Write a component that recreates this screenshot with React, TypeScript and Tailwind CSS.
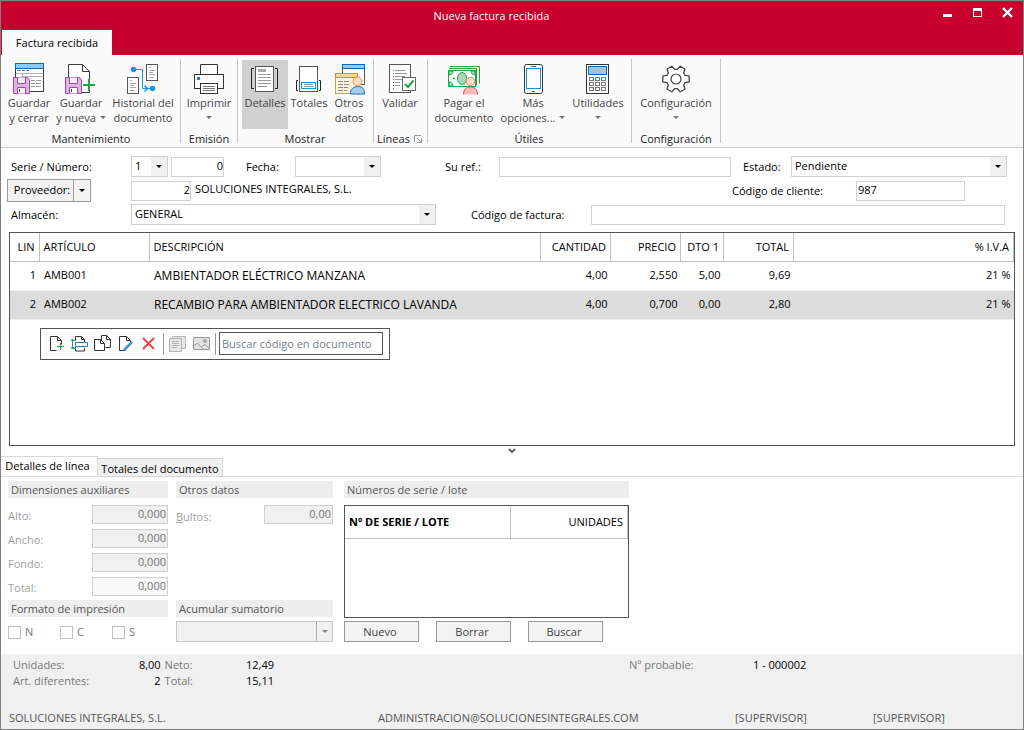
import { ReactNode, useState } from 'react';

/* ---------- Datos de la factura ---------- */

interface Line {
  lin: number;
  code: string;
  description: string;
  quantity: string;
  price: string;
  discount: string;
  total: string;
  vat: string;
}

const lines: Line[] = [
  { lin: 1, code: 'AMB001', description: 'AMBIENTADOR ELÉCTRICO MANZANA', quantity: '4,00', price: '2,550', discount: '5,00', total: '9,69', vat: '21 %' },
  { lin: 2, code: 'AMB002', description: 'RECAMBIO PARA AMBIENTADOR ELECTRICO LAVANDA', quantity: '4,00', price: '0,700', discount: '0,00', total: '2,80', vat: '21 %' },
];

const dimensions = [
  { id: 'alto', label: 'Alto:', readOnly: false },
  { id: 'ancho', label: 'Ancho:', readOnly: false },
  { id: 'fondo', label: 'Fondo:', readOnly: false },
  { id: 'total', label: 'Total:', readOnly: true },
];

/* ---------- Iconos de la cinta ---------- */

// Lienzo común de 32x32 para todos los iconos grandes
function Icon({ children, smooth = false }: { children: ReactNode; smooth?: boolean }) {
  return (
    <svg width="32" height="32" viewBox="0 0 32 32" fill="none" shapeRendering={smooth ? 'auto' : 'crispEdges'} className="shrink-0" aria-hidden="true">
      {children}
    </svg>
  );
}

// Disquete morado que se repite en los dos botones de guardar
function Floppy() {
  return (
    <g stroke="#a04ca0">
      <path d="M.5 14.5h14l2 2v14h-16z" fill="#dcb4dc" />
      <path d="M4.5 14.5v6h8v-6" fill="#f6ecf6" />
      <path d="M4.5 30.5v-6h8v6" fill="#fff" />
      <path d="M6.5 26v3" stroke="#444" />
    </g>
  );
}

function SaveCloseIcon() {
  return (
    <Icon smooth>
      <rect x="2.5" y="5.5" width="28" height="23" fill="#fff" stroke="#3b3b3b" />
      <rect x="2.5" y=".5" width="28" height="5" fill="#91c8f0" stroke="#0f68b0" />
      <path d="M4 7.5h4m1 0h3m1 0h3" stroke="#777" />
      <path d="M3 10.5h27M9.5 10.5v4M9.5 13.5h21" stroke="#b0b0b0" />
      <path d="M18 17.5h4m1 0h5M18 20.5h4m1 0h5M18 23.5h4m1 0h5" stroke="#999" />
      <Floppy />
    </Icon>
  );
}

function SaveNewIcon() {
  return (
    <Icon smooth>
      <path d="M3.5 14.5v-13h14l7 7v21h-8z" fill="#fff" />
      <path d="M3.5 14V1.5h14l7 7V18M24.5 27v2.5H17" stroke="#3b3b3b" />
      <path d="M17.5 1.5v7h7" stroke="#3b3b3b" />
      <Floppy />
      <path d="M18 22h12M24 16v12" stroke="#1aa64b" strokeWidth="2" />
    </Icon>
  );
}

function HistoryIcon() {
  return (
    <Icon smooth>
      <rect x="19.5" y="1.5" width="11" height="16" fill="#fff" stroke="#555" />
      <rect x=".5" y="14.5" width="11" height="16" fill="#fff" stroke="#555" />
      <path d="M22 4.5h2M22 7.5h6M22 9.5h4M22 11.5h6M22 14.5h5M3 17.5h2M3 20.5h6M3 22.5h4M3 24.5h6M3 27.5h5" stroke="#aaa" />
      <path d="M6 6.5h9.5v19H25" stroke="#0a9be3" />
      <path d="M17.5 22.5l3 3-3 3" stroke="#0a9be3" strokeWidth="1.5" />
      <circle cx="6.5" cy="6.5" r="2.7" fill="#0a9be3" />
      <circle cx="25.5" cy="25.5" r="2.7" fill="#0a9be3" />
    </Icon>
  );
}

function PrinterIcon() {
  return (
    <Icon smooth>
      <path d="M7.5 11.5v-10h17v10" fill="#fff" stroke="#333" />
      <rect x="1.5" y="11.5" width="29" height="14" fill="#fff" stroke="#333" />
      <rect x="4" y="14" width="3" height="3" fill="#1e7fcb" />
      <rect x="7.5" y="20.5" width="17" height="10" fill="#fff" stroke="#333" />
      <path d="M10 23.5h12M10 25.5h12M10 27.5h12" stroke="#777" />
    </Icon>
  );
}

function DetailsIcon() {
  return (
    <Icon smooth>
      <rect x="6.5" y="3.5" width="18" height="25" fill="#fff" stroke="#555" />
      <path d="M5 5.5H2.5v20H5M26 5.5h2.5v20H26" stroke="#222" />
      <rect x="9" y="6" width="8" height="3" fill="#aaa" />
      <path d="M9 11.5h13M9 14.5h13M9 17.5h13M9 20.5h13M9 23.5h9" stroke="#999" />
    </Icon>
  );
}

function TotalsIcon() {
  return (
    <Icon smooth>
      <rect x="6.5" y="3.5" width="18" height="25" fill="#fff" stroke="#555" />
      <path d="M5 17.5H3.5v10H5M26 17.5h1.5v10H26" stroke="#222" />
      <rect x="8.5" y="19.5" width="14" height="6" fill="#fff" stroke="#0a9be3" />
      <path d="M11 21.5h9M11 23.5h9" stroke="#999" />
    </Icon>
  );
}

function OtherDataIcon() {
  return (
    <Icon smooth>
      <rect x="9.5" y="1.5" width="22" height="20" fill="#fff" stroke="#555" />
      <rect x="9.5" y="1.5" width="22" height="4" fill="#91c8f0" stroke="#0f68b0" />
      <rect x="2.5" y="10.5" width="22" height="20" fill="#fdf3dc" stroke="#b4a078" />
      <rect x="2.5" y="10.5" width="22" height="4" fill="#f9d68c" stroke="#e0892c" />
      <path d="M5 18.5h5m1 0h5M5 21.5h5m1 0h5M5 24.5h5m1 0h4M5 27.5h5m1 0h3" stroke="#8a8a8a" />
      <path d="M17.5 31c0-5 3-7.500 7.500-7.500s6.500 2.500 6.500 7.500z" fill="#a5cdf0" stroke="#1e6fb8" />
      <circle cx="24.5" cy="18.5" r="4.5" fill="#fbdcc0" stroke="#d9935a" />
    </Icon>
  );
}

function ValidateIcon() {
  return (
    <Icon smooth>
      <rect x="5.5" y="1.5" width="21" height="28" fill="#fff" stroke="#555" />
      <path d="M9 7.5h1M9 13.5h1M9 19.5h1" stroke="#d03030" />
      <path d="M9 10.5h1M9 16.5h1M9 22.5h1M9 25.5h1" stroke="#1aa64b" />
      <path d="M11 7.5h10M11 10.5h12M11 13.5h10M11 16.5h7M11 19.5h5M11 22.5h5" stroke="#999" />
      <rect x="18.5" y="14.5" width="13" height="13" fill="#fff" stroke="#666" />
      <path d="M21 21l3 3 5.5-6.5" stroke="#1aa64b" strokeWidth="2" />
    </Icon>
  );
}

function PayIcon() {
  return (
    <Icon smooth>
      <path d="M2 3.5h29.5v17M1 5.500h27.500v17" stroke="#1aa64b" />
      <rect x=".5" y="7.5" width="27" height="16" fill="#fff" stroke="#1aa64b" />
      <path d="M1 8h4c0 2.500-1.500 4-4 4zM27 8h-4c0 2.500 1.500 4 4 4zM1 23h4c0-2.500-1.500-4-4-4z" fill="#a8d8b8" stroke="#1aa64b" />
      <ellipse cx="14" cy="15.5" rx="4.5" ry="6" fill="#a8d8b8" stroke="#1aa64b" />
      <circle cx="6" cy="15.5" r="1" fill="#1aa64b" />
      <path d="M15.5 31.5c0-5 2.500-7.500 7-7.500s7 2.500 7 7.500" fill="#f6b8b8" stroke="#e05050" />
      <circle cx="22.5" cy="18.5" r="4.300" fill="#fbdcc0" stroke="#c98f5e" />
    </Icon>
  );
}

function PhoneIcon() {
  return (
    <Icon smooth>
      <rect x="7.5" y="1.5" width="18" height="29" rx="2" fill="#fff" stroke="#333" />
      <rect x="9.5" y="5.5" width="14" height="20" fill="#fff" stroke="#1e88c9" />
      <path d="M14 3.5h5M15 28.5h3" stroke="#555" />
    </Icon>
  );
}

function CalculatorIcon() {
  return (
    <Icon smooth>
      <rect x="4.5" y="1.5" width="22" height="29" fill="#fff" stroke="#333" />
      <rect x="6.5" y="3.5" width="18" height="8" fill="#91c8f0" stroke="#0f68b0" />
      {[14, 19, 24].map((y) =>
        [7, 13, 19].map((x) => <rect key={`${x}-${y}`} x={x + 0.5} y={y + 0.5} width="4" height="3" stroke="#777" />)
      )}
    </Icon>
  );
}

// Puntos del engranaje: seis dientes repartidos cada 60 grados
const gearPoints = [0, 60, 120, 180, 240, 300]
  .flatMap((a) => [[a - 22, 9.8], [a - 12, 13.5], [a + 12, 13.5], [a + 22, 9.8]])
  .map(([a, r]) => {
    const rad = (a * Math.PI) / 180;
    return `${(16 + r * Math.cos(rad)).toFixed(1)},${(16 + r * Math.sin(rad)).toFixed(1)}`;
  })
  .join(' ');

function GearIcon() {
  return (
    <Icon smooth>
      <polygon points={gearPoints} fill="#fff" stroke="#444" strokeWidth="1.3" strokeLinejoin="round" />
      <circle cx="16" cy="16" r="5" stroke="#444" strokeWidth="1.2" />
    </Icon>
  );
}

/* ---------- Piezas comunes ---------- */

function Caret({ className = '' }: { className?: string }) {
  return (
    <svg width="6" height="3" viewBox="0 0 6 3" fill="currentColor" className={className} aria-hidden="true">
      <path d="M0 0h6L3 3z" />
    </svg>
  );
}

interface RibbonButtonProps {
  icon: ReactNode;
  first: string;
  second?: string;
  menu?: boolean;
  active?: boolean;
  width: string;
}

// Botón grande de la cinta: icono arriba y una o dos líneas de texto
function RibbonButton({ icon, first, second, menu, active, width }: RibbonButtonProps) {
  return (
    <button type="button" className={`flex h-[69px] flex-col items-center pt-[3px] text-[11px] leading-[15px] whitespace-nowrap text-[#444] ${width} ${active ? 'bg-[#d0d0d0]' : 'hover:bg-[#e4e4e4]'}`}>
      {icon}
      <span>{first}</span>
      {(second || menu) && (
        <span className="flex h-[15px] items-center gap-1">
          {second}
          {menu && <Caret className="text-[#777]" />}
        </span>
      )}
    </button>
  );
}

function RibbonGroup({ title, width, launcher, children }: { title: string; width: string; launcher?: boolean; children: ReactNode }) {
  return (
    <section className={`flex h-[84px] flex-col border-r border-[#c6c6c6] pt-px ${width}`}>
      <div className="flex justify-center">{children}</div>
      <div className="flex items-center justify-center gap-1 pt-[2px] text-[11px] leading-[15px] text-[#222]">
        {title}
        {launcher && (
          <button type="button" aria-label="Opciones de líneas" className="pt-[2px]">
            <svg width="9" height="9" viewBox="0 0 9 9" fill="none" stroke="#999">
              <path d="M.5 7V.5H7M3 3l4 4M7.5 3.500v4h-4" />
            </svg>
          </button>
        )}
      </div>
    </section>
  );
}

// Desplegable con la flecha sobre fondo gris a la derecha
function SelectBox({ id, value, className, disabled }: { id: string; value: string; className: string; disabled?: boolean }) {
  return (
    <div className={`relative flex h-[21px] border ${disabled ? 'border-[#c8c8c8] bg-[#f0f0f0]' : 'border-[#d0d0d0] bg-white'} ${className}`}>
      <select id={id} aria-label={id} disabled={disabled} className="w-full appearance-none bg-transparent pl-[3px] outline-none">
        <option>{value}</option>
      </select>
      <span className={`pointer-events-none absolute inset-y-0 right-0 flex w-4 items-center justify-center bg-[#f0f0f0] ${disabled ? 'border-l border-[#aaa] text-[#888]' : 'text-black'}`}>
        <Caret />
      </span>
    </div>
  );
}

const field = 'h-[20px] min-w-0 border border-[#d0d0d0] bg-white pb-[2px] outline-none';

function SectionTitle({ children }: { children: ReactNode }) {
  return <h3 className="h-[17px] bg-[#eeeeee] pl-[3px] leading-[17px] text-[#555]">{children}</h3>;
}

/* ---------- Zonas de la ventana ---------- */

function TitleBar() {
  return (
    <header className="bg-[#c8002d] text-white">
      <div className="flex h-[29px] items-center pr-[10px] pl-10">
        <h1 className="flex-1 pt-[2px] text-center text-[11px]">Nueva factura recibida</h1>
        <div className="flex gap-[19px] pb-[6px]">
          <button type="button" aria-label="Minimizar">
            <svg width="11" height="11" viewBox="0 0 11 11" fill="#fff"><path d="M1 7h9v3H1z" /></svg>
          </button>
          <button type="button" aria-label="Maximizar">
            <svg width="11" height="11" viewBox="0 0 11 11" fill="#fff" fillRule="evenodd"><path d="M1 1h9v9H1zM2 4v5h7V4z" /></svg>
          </button>
          <button type="button" aria-label="Cerrar">
            <svg width="11" height="11" viewBox="0 0 11 11" stroke="#fff" strokeWidth="2.4"><path d="M1 1l9 9M10 1l-9 9" /></svg>
          </button>
        </div>
      </div>
      <div className="flex px-px" role="tablist">
        <button type="button" role="tab" aria-selected="true" className="h-[25px] w-[110px] bg-[#fafafa] pt-[2px] text-[11px] text-black">
          Factura recibida
        </button>
      </div>
    </header>
  );
}

function Ribbon() {
  return (
    <nav className="flex h-[93px] border-b border-[#c6c6c6] bg-[#fafafa] pt-[4px]">
      <RibbonGroup title="Mantenimiento" width="w-[180px] pl-px">
        <RibbonButton icon={<SaveCloseIcon />} first="Guardar" second="y cerrar" width="w-[52px]" />
        <RibbonButton icon={<SaveNewIcon />} first="Guardar" second="y nueva" menu width="w-[52px]" />
        <RibbonButton icon={<HistoryIcon />} first="Historial del" second="documento" width="w-[72px]" />
      </RibbonGroup>
      <RibbonGroup title="Emisión" width="w-[57px]">
        <RibbonButton icon={<PrinterIcon />} first="Imprimir" menu width="w-[52px]" />
      </RibbonGroup>
      <RibbonGroup title="Mostrar" width="w-[136px] pr-px">
        <RibbonButton icon={<DetailsIcon />} first="Detalles" active width="w-[46px]" />
        <RibbonButton icon={<TotalsIcon />} first="Totales" width="w-[42px]" />
        <RibbonButton icon={<OtherDataIcon />} first="Otros" second="datos" width="w-[38px]" />
      </RibbonGroup>
      <RibbonGroup title="Líneas" width="w-[54px] pr-px" launcher>
        <RibbonButton icon={<ValidateIcon />} first="Validar" width="w-[46px]" />
      </RibbonGroup>
      <RibbonGroup title="Útiles" width="w-[204px] pr-px">
        <RibbonButton icon={<PayIcon />} first="Pagar el" second="documento" width="w-[66px]" />
        <RibbonButton icon={<PhoneIcon />} first="Más" second="opciones..." menu width="w-[72px]" />
        <RibbonButton icon={<CalculatorIcon />} first="Utilidades" menu width="w-[58px]" />
      </RibbonGroup>
      <RibbonGroup title="Configuración" width="w-[89px]">
        <RibbonButton icon={<GearIcon />} first="Configuración" menu width="w-[80px]" />
      </RibbonGroup>
    </nav>
  );
}

function InvoiceForm() {
  return (
    <form className="flex flex-col gap-[3px] pt-2 pr-4 pb-[7px] pl-[6px]">
      <div className="flex h-[21px] items-center">
        <label htmlFor="serie" className="w-[124px] pt-[2px] pl-1">Serie / Número:</label>
        <SelectBox id="serie" value="1" className="w-[37px]" />
        <input id="numero" aria-label="Número" defaultValue="0" className={`${field} ml-[3px] w-[53px] text-right`} />
        <label htmlFor="fecha" className="ml-[22px] w-[49px] pt-[2px]">Fecha:</label>
        <SelectBox id="fecha" value="" className="w-[86px]" />
        <label htmlFor="ref" className="ml-16 w-[54px] pt-[2px]">Su ref.:</label>
        <input id="ref" className={`${field} flex-1`} />
        <label htmlFor="estado" className="ml-3 w-12 pt-[2px]">Estado:</label>
        <SelectBox id="estado" value="Pendiente" className="w-[216px]" />
      </div>
      <div className="flex h-[21px] items-center">
        <div className="flex h-[23px] w-[84px] divide-x divide-[#999] border border-[#999] bg-[#f3f3f3]">
          <button type="button" className="flex-1 pl-[3px]">Proveedor:</button>
          <button type="button" aria-label="Más proveedores" className="flex w-4 items-center justify-center"><Caret /></button>
        </div>
        <input aria-label="Código de proveedor" defaultValue="2" className={`${field} ml-10 w-[60px] text-right`} />
        <span className="ml-1 flex-1 pb-[2px]">SOLUCIONES INTEGRALES, S.L.</span>
        <label htmlFor="cliente" className="w-[124px] pt-[2px]">Código de cliente:</label>
        <input id="cliente" defaultValue="987" className={`${field} mr-[42px] w-[109px] pl-px`} />
      </div>
      <div className="flex h-[21px] items-center">
        <label htmlFor="almacen" className="w-[124px] pt-[2px] pl-1">Almacén:</label>
        <SelectBox id="almacen" value="GENERAL" className="w-[305px]" />
        <label htmlFor="factura" className="ml-[35px] w-[120px] pt-[2px]">Código de factura:</label>
        <input id="factura" className={`${field} mr-[2px] flex-1`} />
      </div>
    </form>
  );
}

// Barra flotante con las acciones sobre las líneas
function LineToolbar() {
  const [query, setQuery] = useState('');
  const doc = 'M9.5 1.5h-7v14h6M9.5 1.500l4 4v4M9.500 1.500v4h4';

  return (
    <div className="mt-2 ml-[30px] flex h-8 w-[350px] items-center border border-[#555] bg-white pl-[7px]">
      <div className="flex w-[109px] items-center justify-between">
        <button type="button" aria-label="Nueva línea">
          <svg width="17" height="17" viewBox="0 0 17 17" fill="none" stroke="#333"><path d={doc} /><path d="M9 11.500h7M12.500 8v7" stroke="#1aa64b" /></svg>
        </button>
        <button type="button" aria-label="Insertar línea">
          <svg width="17" height="17" viewBox="0 0 17 17" fill="none" stroke="#333">
            <path d="M4.5 6V1.500h6l3 3V7M10.500 1.500v3h3M4.500 12v4h9v-3" />
            <path d="M4.5 7.500h12v4h-12z" fill="#fff" stroke="#1e7fcb" />
            <path d="M1.5 4v10M0 6l1.500-2L3 6M0 12l1.500 2L3 12M1 5.500h4M1 13.500h4" stroke="#1aa64b" />
          </svg>
        </button>
        <button type="button" aria-label="Duplicar línea">
          <svg width="17" height="17" viewBox="0 0 17 17" fill="none" stroke="#333">
            <path d="M7.5 5V.5h5l4 4v8h-5M12.500.5v4h4" />
            <path d="M6.5 4.500h-6v11h10v-7l-4-4v4h4" fill="#fff" />
          </svg>
        </button>
        <button type="button" aria-label="Modificar línea">
          <svg width="17" height="17" viewBox="0 0 17 17" fill="none" stroke="#333"><path d={doc} /><path d="M7 15l8-8" stroke="#3b97d3" strokeWidth="2.500" /></svg>
        </button>
        <button type="button" aria-label="Borrar línea">
          <svg width="17" height="17" viewBox="0 0 17 17" stroke="#ee4444" strokeWidth="2"><path d="M3 3l11 11M14 3L3 14" /></svg>
        </button>
      </div>
      <div className="ml-[6px] flex h-[22px] w-[53px] items-center justify-between border-x border-[#999] px-[5px]">
        <button type="button" disabled aria-label="Notas">
          <svg width="17" height="17" viewBox="0 0 17 17" fill="#e6e6e6" stroke="#b4b4b4">
            <path d="M3.5 1.500h13v12h-13z" /><path d="M.5 3.500h12v13H.500z" /><path d="M3 6.500h7M3 8.500h7M3 10.500h7M3 12.500h5" />
          </svg>
        </button>
        <button type="button" disabled aria-label="Imagen">
          <svg width="17" height="17" viewBox="0 0 17 17" fill="#e2e2e2" stroke="#999">
            <path d="M.5 2.500h16v12H.500z" /><path d="M.5 11l4-3 6 6.500M9 11.500l3-2 4.500 4" fill="none" /><circle cx="12" cy="6" r="1.500" fill="#bbb" />
          </svg>
        </button>
      </div>
      <input
        aria-label="Buscar código en documento"
        placeholder="Buscar código en documento"
        value={query}
        onChange={(e) => setQuery(e.target.value)}
        className="ml-[3px] h-[23px] w-[164px] border border-[#555] pl-[2px] text-[11px] outline-none placeholder:text-[#77808c]"
      />
    </div>
  );
}

function LinesGrid() {
  return (
    <section className="mx-2 flex min-h-[213px] flex-1 flex-col border border-[#555] bg-white">
      <table className="w-full table-fixed border-collapse text-right">
        <colgroup>
          <col className="w-[29px]" />
          <col className="w-[110px]" />
          <col />
          <col className="w-[70px]" />
          <col className="w-[70px]" />
          <col className="w-[43px]" />
          <col className="w-[70px]" />
          <col className="w-[220px]" />
        </colgroup>
        <thead>
          <tr className="h-7 border-b border-[#c0c0c0] *:border-r *:border-[#c0c0c0] *:px-[4px] *:font-normal *:whitespace-nowrap">
            <th>LIN</th>
            <th className="text-left">ARTÍCULO</th>
            <th className="text-left">DESCRIPCIÓN</th>
            <th>CANTIDAD</th>
            <th>PRECIO</th>
            <th>DTO 1</th>
            <th>TOTAL</th>
            <th>% I.V.A</th>
          </tr>
        </thead>
        <tbody>
          {lines.map((line) => (
            <tr key={line.lin} className="h-[29px] border-b border-[#f0f0f0] even:bg-[#dcdcdc] *:pr-[3px] *:pl-[5px] *:whitespace-nowrap">
              <td>{line.lin}</td>
              <td className="text-left">{line.code}</td>
              <td className="text-left text-[12px]">{line.description}</td>
              <td>{line.quantity}</td>
              <td>{line.price}</td>
              <td>{line.discount}</td>
              <td>{line.total}</td>
              <td>{line.vat}</td>
            </tr>
          ))}
        </tbody>
      </table>
      <LineToolbar />
    </section>
  );
}

function DetailTabs() {
  return (
    <div className="flex h-[21px] items-end border-b border-[#d8d8d8]" role="tablist">
      <button type="button" role="tab" aria-selected="true" className="h-[20px] w-[97px] border-t border-r border-[#d8d8d8] bg-white pr-[3px] text-[11px]">
        Detalles de línea
      </button>
      <button type="button" role="tab" aria-selected="false" className="h-[18px] w-[125px] border-t border-r border-[#d8d8d8] bg-[#f0f0f0] pt-[2px] text-[11px]">
        Totales del documento
      </button>
    </div>
  );
}

function LineDetails() {
  const input = 'h-[19px] border border-[#d0d0d0] pr-px pb-[2px] text-right text-[#777]';

  return (
    <section className="flex gap-2 px-[7px] pt-1 pb-[12px]">
      <div className="w-40">
        <SectionTitle>Dimensiones auxiliares</SectionTitle>
        <div className="flex flex-col gap-[5px] pt-[7px] pb-1">
          {dimensions.map((d) => (
            <div key={d.id} className="flex h-[19px] items-center justify-between">
              <label htmlFor={d.id} className="pt-[3px] text-[#a0a0a0]">{d.label}</label>
              <input id={d.id} disabled defaultValue="0,000" className={`${input} w-[76px] ${d.readOnly ? 'bg-[#f8f8f8]' : 'bg-[#f0f0f0]'}`} />
            </div>
          ))}
        </div>
        <SectionTitle>Formato de impresión</SectionTitle>
        <div className="flex pt-[7px]">
          {['N', 'C', 'S'].map((letter) => (
            <label key={letter} className="flex w-[52px] items-center gap-1 text-[#777]">
              <input type="checkbox" disabled className="size-[13px] appearance-none border border-[#c0c0c0] bg-white" />
              {letter}
            </label>
          ))}
        </div>
      </div>

      <div className="flex w-[157px] flex-col">
        <SectionTitle>Otros datos</SectionTitle>
        <div className="flex h-[102px] items-start justify-between pt-[7px]">
          <label htmlFor="bultos" className="pt-[2px] leading-[19px] text-[#a0a0a0]"><u>B</u>ultos:</label>
          <input id="bultos" disabled defaultValue="0,00" className={`${input} w-[69px] bg-[#f0f0f0]`} />
        </div>
        <SectionTitle>Acumular sumatorio</SectionTitle>
        <SelectBox id="acumular" value="" disabled className="mt-[4px]" />
      </div>

      <div className="ml-[3px] w-[285px]">
        <SectionTitle>Números de serie / lote</SectionTitle>
        <div className="mt-[7px] h-[113px] border border-[#555] bg-white">
          <table className="w-full table-fixed border-collapse">
            <thead>
              <tr className="h-8 border-b border-[#c0c0c0] *:border-r *:border-[#c0c0c0] *:px-[4px]">
                <th className="w-[165px] text-left font-bold">Nº DE SERIE / LOTE</th>
                <th className="text-right font-normal">UNIDADES</th>
              </tr>
            </thead>
          </table>
        </div>
        <div className="flex gap-[17px] pt-[3px]">
          {['Nuevo', 'Borrar', 'Buscar'].map((text) => (
            <button key={text} type="button" className="h-[21px] w-[75px] border border-[#999] bg-[#f3f3f3] pt-[2px] pr-[3px] text-[#444]">{text}</button>
          ))}
        </div>
      </div>
    </section>
  );
}

function Summary() {
  return (
    <footer className="bg-[#f0f0f0] text-[#777]">
      <div className="flex px-3 pt-[3px] leading-4">
        <dl className="grid w-[261px] grid-cols-[1fr_auto_auto_77px] gap-x-1">
          <dt>Unidades:</dt>
          <dd className="text-right text-black">8,00</dd>
          <dt>Neto:</dt>
          <dd className="text-right text-black">12,49</dd>
          <dt>Art. diferentes:</dt>
          <dd className="text-right text-black">2</dd>
          <dt>Total:</dt>
          <dd className="text-right text-black">15,11</dd>
        </dl>
        <p className="ml-auto w-[124px]">Nº probable:</p>
        <p className="w-[258px] text-black">1 - 000002</p>
      </div>
      <div className="flex px-2 pt-[21px] pb-[3px] leading-4 text-[#555]">
        <span className="w-[369px]">SOLUCIONES INTEGRALES, S.L.</span>
        <span className="flex-1">ADMINISTRACION@SOLUCIONESINTEGRALES.COM</span>
        <span className="w-[138px]">[SUPERVISOR]</span>
        <span className="w-[142px]">[SUPERVISOR]</span>
      </div>
    </footer>
  );
}

export default function App() {
  return (
    <main className="flex min-h-screen flex-col border border-[#808080] bg-white font-['Open_Sans','Noto_Sans',sans-serif] text-[11px] text-black">
      <TitleBar />
      <Ribbon />
      <InvoiceForm />
      <LinesGrid />
      <button type="button" aria-label="Ocultar detalles" className="flex h-[10px] items-center justify-center">
        <svg width="8" height="6" viewBox="0 0 8 6" fill="none" stroke="#666" strokeWidth="2"><path d="M1 1l3 3 3-3" /></svg>
      </button>
      <DetailTabs />
      <LineDetails />
      <Summary />
    </main>
  );
}
